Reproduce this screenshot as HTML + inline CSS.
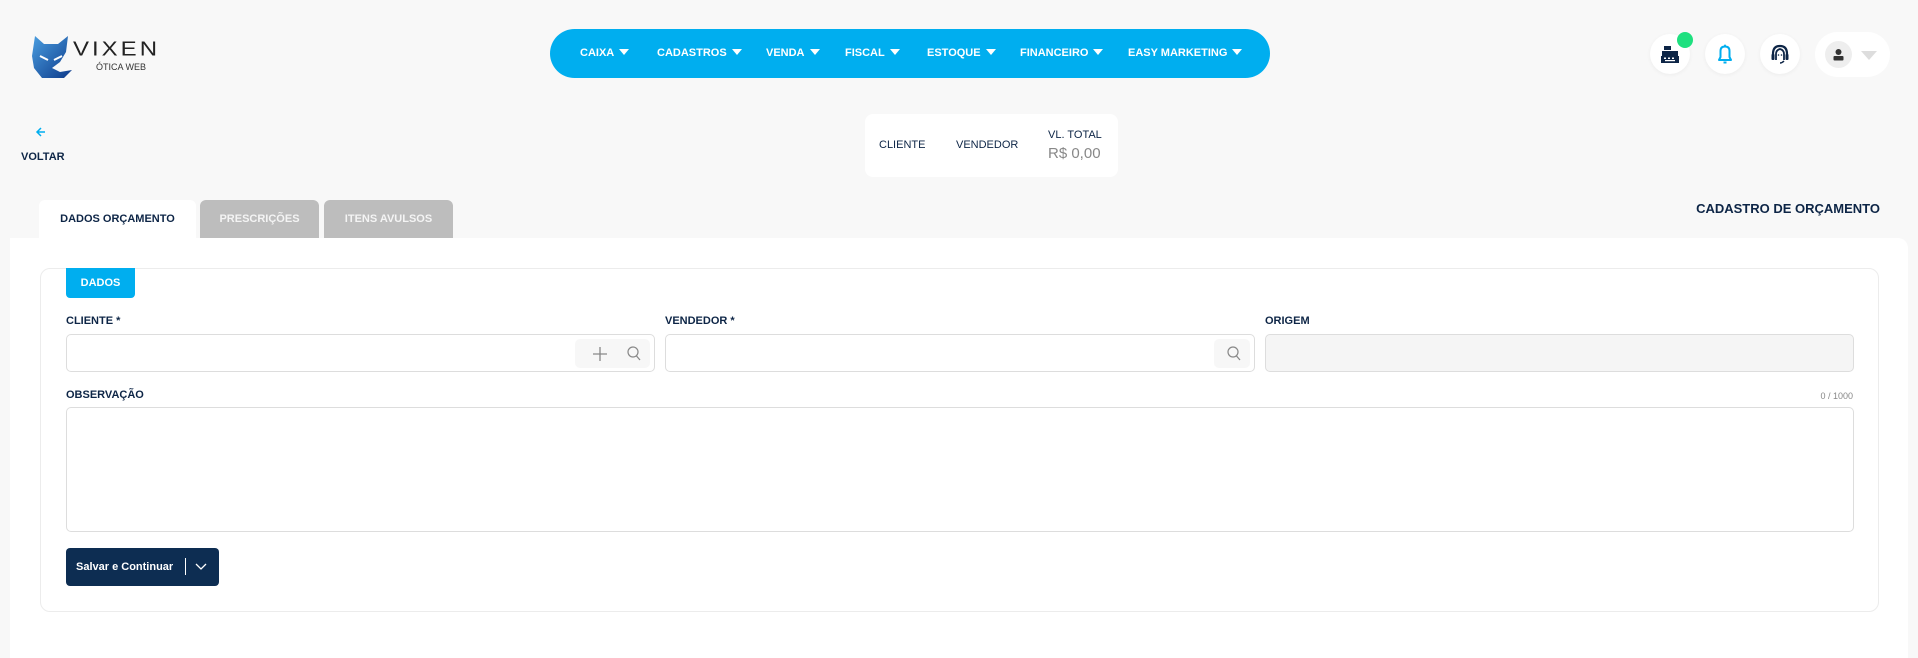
<!DOCTYPE html>
<html><head><meta charset="utf-8"><style>
*{box-sizing:border-box;margin:0;padding:0}
body{width:1918px;height:648px;background:#f8f8f8;font-family:"Liberation Sans",sans-serif;position:relative;overflow:hidden;color:#0d2546}
.abs{position:absolute}
.nav{left:550px;top:29px;width:720px;height:49px;border-radius:25px;background:#00aeef}
.nav span{position:absolute;top:18px;color:#fff;font-size:11px;font-weight:bold;white-space:nowrap}
.nav span:after{content:"";display:inline-block;margin-left:5px;border-left:5px solid transparent;border-right:5px solid transparent;border-top:6px solid #fff;vertical-align:1px}
.circ{width:40px;height:40px;border-radius:50%;background:#fff;top:34px;box-shadow:0 1px 4px rgba(0,0,0,.05)}
.lbl{font-size:11px;font-weight:bold;color:#0d2546}
.inp{border:1px solid #ddd;border-radius:5px;background:#fff;height:38px}
.tab{top:200px;height:38px;border-radius:6px 6px 0 0;font-size:11px;font-weight:bold;text-align:center;line-height:38px}
</style></head><body>
<svg class="abs" style="left:30px;top:34px" width="45" height="45" viewBox="0 0 45 45">
<defs><linearGradient id="g" x1="0" y1="0" x2="1" y2="1"><stop offset="0" stop-color="#4a9ee0"/><stop offset="1" stop-color="#0d3a8a"/></linearGradient></defs>
<path d="M5 2 L14 10 L28 10 L38 2 L36 18 L30 28 L22 34 L30 38 L42 36 L34 44 L12 44 L4 34 L2 22 Z" fill="url(#g)"/>
<path d="M10 22 L18 26 M32 22 L24 26" stroke="#fff" stroke-width="2"/>
</svg>
<div class="abs" style="left:73px;top:40px;font-size:24px;letter-spacing:3px;color:#222;line-height:22px;transform:scaleY(0.85);transform-origin:top left">VIXEN</div>
<div class="abs" style="left:96px;top:62px;font-size:9px;color:#333">ÓTICA WEB</div>
<div class="abs nav">
<span style="left:30px">CAIXA</span><span style="left:107px">CADASTROS</span><span style="left:216px">VENDA</span><span style="left:295px">FISCAL</span><span style="left:377px">ESTOQUE</span><span style="left:470px">FINANCEIRO</span><span style="left:578px">EASY MARKETING</span>
</div>
<div class="abs circ" style="left:1650px">
<svg width="40" height="40" viewBox="0 0 40 40"><rect x="14" y="12" width="7" height="4" fill="#0d2546"/><rect x="12" y="17" width="16" height="5" fill="#0d2546"/><rect x="11" y="22" width="18" height="7" fill="#0d2546"/><g fill="#fff"><rect x="14" y="23.5" width="2" height="1.5"/><rect x="18" y="23.5" width="2" height="1.5"/><rect x="22" y="23.5" width="2" height="1.5"/><rect x="15" y="26" width="10" height="1.2"/></g></svg></div>
<div class="abs" style="left:1677px;top:32px;width:16px;height:16px;border-radius:50%;background:#1ee07f"></div>
<div class="abs circ" style="left:1705px">
<svg width="40" height="40" viewBox="0 0 40 40"><path d="M14 26 L26 26 L24.5 23 L24.5 17 Q24.5 12.5 20 12.5 Q15.5 12.5 15.5 17 L15.5 23 Z" fill="none" stroke="#00aeef" stroke-width="2" stroke-linejoin="round"/><path d="M18.5 28.5 L21.5 28.5" stroke="#00aeef" stroke-width="2"/><circle cx="20" cy="11.5" r="1" fill="#00aeef"/></svg></div>
<div class="abs circ" style="left:1760px">
<svg width="40" height="40" viewBox="0 0 40 40"><path d="M13 24 L13 20 Q13 12 20 12 Q27 12 27 20 L27 24" fill="none" stroke="#0d2546" stroke-width="2.2"/><path d="M16 26 L16 20 Q16 16 20 15 Q24 16 24 20 L24 26" fill="none" stroke="#0d2546" stroke-width="1.8"/><rect x="11.5" y="20" width="3" height="6" rx="1" fill="#0d2546"/><rect x="25.5" y="20" width="3" height="6" rx="1" fill="#0d2546"/><circle cx="18.5" cy="21" r=".8" fill="#0d2546"/><circle cx="21.5" cy="21" r=".8" fill="#0d2546"/><path d="M24 27 Q22 29 20 29" stroke="#0d2546" stroke-width="1.5" fill="none"/></svg></div>
<div class="abs" style="left:1815px;top:32px;width:75px;height:45px;border-radius:23px;background:#fff">
<div class="abs" style="left:10px;top:9px;width:27px;height:27px;border-radius:50%;background:#eee">
<svg width="27" height="27" viewBox="0 0 27 27"><circle cx="13.5" cy="11" r="3" fill="#333"/><rect x="8.5" y="15" width="10" height="4.5" rx="1" fill="#333"/></svg></div>
<div class="abs" style="left:46px;top:19px;border-left:8px solid transparent;border-right:8px solid transparent;border-top:9px solid #ddd"></div>
</div>
<svg class="abs" style="left:35px;top:126px" width="12" height="12" viewBox="0 0 12 12"><path d="M10 6 L2 6 M6 2 L2 6 L6 10" stroke="#00aeef" stroke-width="1.5" fill="none"/></svg>
<div class="abs lbl" style="left:21px;top:151px">VOLTAR</div>
<div class="abs" style="left:865px;top:114px;width:253px;height:63px;background:#fff;border-radius:8px"></div>
<div class="abs lbl" style="left:879px;top:139px;font-weight:normal">CLIENTE</div>
<div class="abs lbl" style="left:956px;top:139px;font-weight:normal">VENDEDOR</div>
<div class="abs lbl" style="left:1048px;top:129px;font-weight:normal">VL. TOTAL</div>
<div class="abs" style="left:1048px;top:145px;font-size:15px;color:#888">R$ 0,00</div>
<div class="abs tab" style="left:39px;width:157px;background:#fff;color:#0d2546">DADOS ORÇAMENTO</div>
<div class="abs tab" style="left:200px;width:119px;background:#bdbdbd;color:#f4f4f4">PRESCRIÇÕES</div>
<div class="abs tab" style="left:324px;width:129px;background:#bdbdbd;color:#f4f4f4">ITENS AVULSOS</div>
<div class="abs" style="right:38px;top:201px;font-size:13px;font-weight:bold">CADASTRO DE ORÇAMENTO</div>
<div class="abs" style="left:10px;top:238px;width:1898px;height:420px;background:#fff;border-radius:0 10px 0 0"></div>
<div class="abs" style="left:40px;top:268px;width:1839px;height:344px;border:1px solid #ececec;border-radius:10px"></div>
<div class="abs" style="left:66px;top:268px;width:69px;height:30px;background:#00aeef;border-radius:0 0 4px 4px;color:#fff;font-size:11px;font-weight:bold;text-align:center;line-height:30px">DADOS</div>
<div class="abs lbl" style="left:66px;top:315px">CLIENTE *</div>
<div class="abs lbl" style="left:665px;top:315px">VENDEDOR *</div>
<div class="abs lbl" style="left:1265px;top:315px">ORIGEM</div>
<div class="abs inp" style="left:66px;top:334px;width:589px">
<div class="abs" style="right:4px;top:4px;width:75px;height:29px;background:#f7f7f7;border-radius:5px"></div>
<svg class="abs" style="right:46px;top:11px" width="16" height="16" viewBox="0 0 16 16"><path d="M8 1 V15 M1 8 H15" stroke="#888" stroke-width="1.3"/></svg>
<svg class="abs" style="right:12px;top:10px" width="16" height="17" viewBox="0 0 16 17"><circle cx="7" cy="7" r="5" stroke="#888" stroke-width="1.2" fill="none"/><path d="M10.5 11 L14 15" stroke="#888" stroke-width="1.3"/></svg>
</div>
<div class="abs inp" style="left:665px;top:334px;width:590px">
<div class="abs" style="right:4px;top:4px;width:36px;height:29px;background:#f7f7f7;border-radius:5px"></div>
<svg class="abs" style="right:12px;top:10px" width="16" height="17" viewBox="0 0 16 17"><circle cx="7" cy="7" r="5" stroke="#888" stroke-width="1.2" fill="none"/><path d="M10.5 11 L14 15" stroke="#888" stroke-width="1.3"/></svg>
</div>
<div class="abs inp" style="left:1265px;top:334px;width:589px;background:#f5f5f5"></div>
<div class="abs lbl" style="left:66px;top:389px">OBSERVAÇÃO</div>
<div class="abs" style="right:65px;top:391px;font-size:9px;color:#888">0 / 1000</div>
<div class="abs inp" style="left:66px;top:407px;width:1788px;height:125px"></div>
<div class="abs" style="left:66px;top:548px;width:153px;height:38px;background:#0d2d52;border-radius:4px;color:#fff;font-size:11px;font-weight:bold">
<span class="abs" style="left:10px;top:13px">Salvar e Continuar</span>
<span class="abs" style="left:119px;top:10px;width:1px;height:17px;background:#fff"></span>
<svg class="abs" style="left:129px;top:14px" width="12" height="10" viewBox="0 0 12 10"><path d="M1 2 L6 7 L11 2" stroke="#fff" stroke-width="1.3" fill="none"/></svg>
</div>
</body></html>
